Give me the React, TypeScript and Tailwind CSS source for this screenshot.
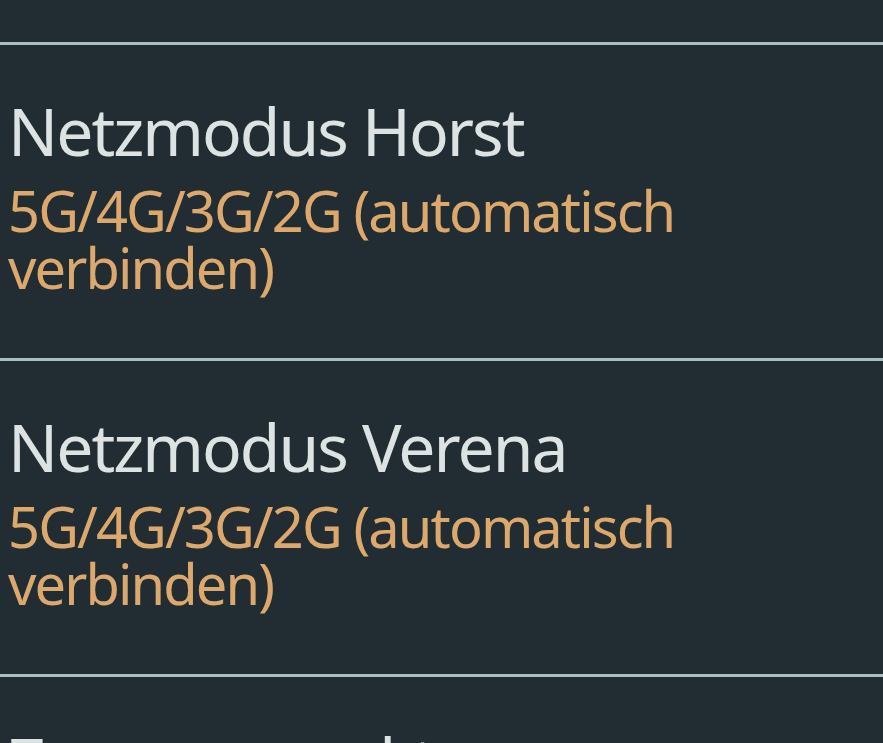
export default function App() {
  const items = [
    { title: "Netzmodus Horst", sub: "5G/4G/3G/2G (automatisch verbinden)" },
    { title: "Netzmodus Verena", sub: "5G/4G/3G/2G (automatisch verbinden)" },
  ];
  return (
    <div
      className="w-[883px] h-[743px] overflow-hidden bg-[#212d32]"
      style={{ fontFamily: '"Noto Sans", "Open Sans", sans-serif' }}
    >
      <div className="h-[45px] border-b-[3px] border-[#a9bec3]" />
      {items.map((it) => (
        <div key={it.title} className="border-b-[3px] border-[#a9bec3] pl-2 pr-4 pt-[45px] pb-[62px]">
          <div className="text-[66px] leading-[80px] tracking-[-2px] text-[#dde3e3]">{it.title}</div>
          <div className="mt-[12px] text-[56px] leading-[57px] tracking-[-1.9px] text-[#dca86c]">{it.sub}</div>
        </div>
      ))}
      <div className="pl-2 pr-4 pt-[43px]">
        <div className="text-[66px] leading-[80px] tracking-[-2px] text-[#dde3e3]">Zugangspunkte</div>
      </div>
    </div>
  );
}
